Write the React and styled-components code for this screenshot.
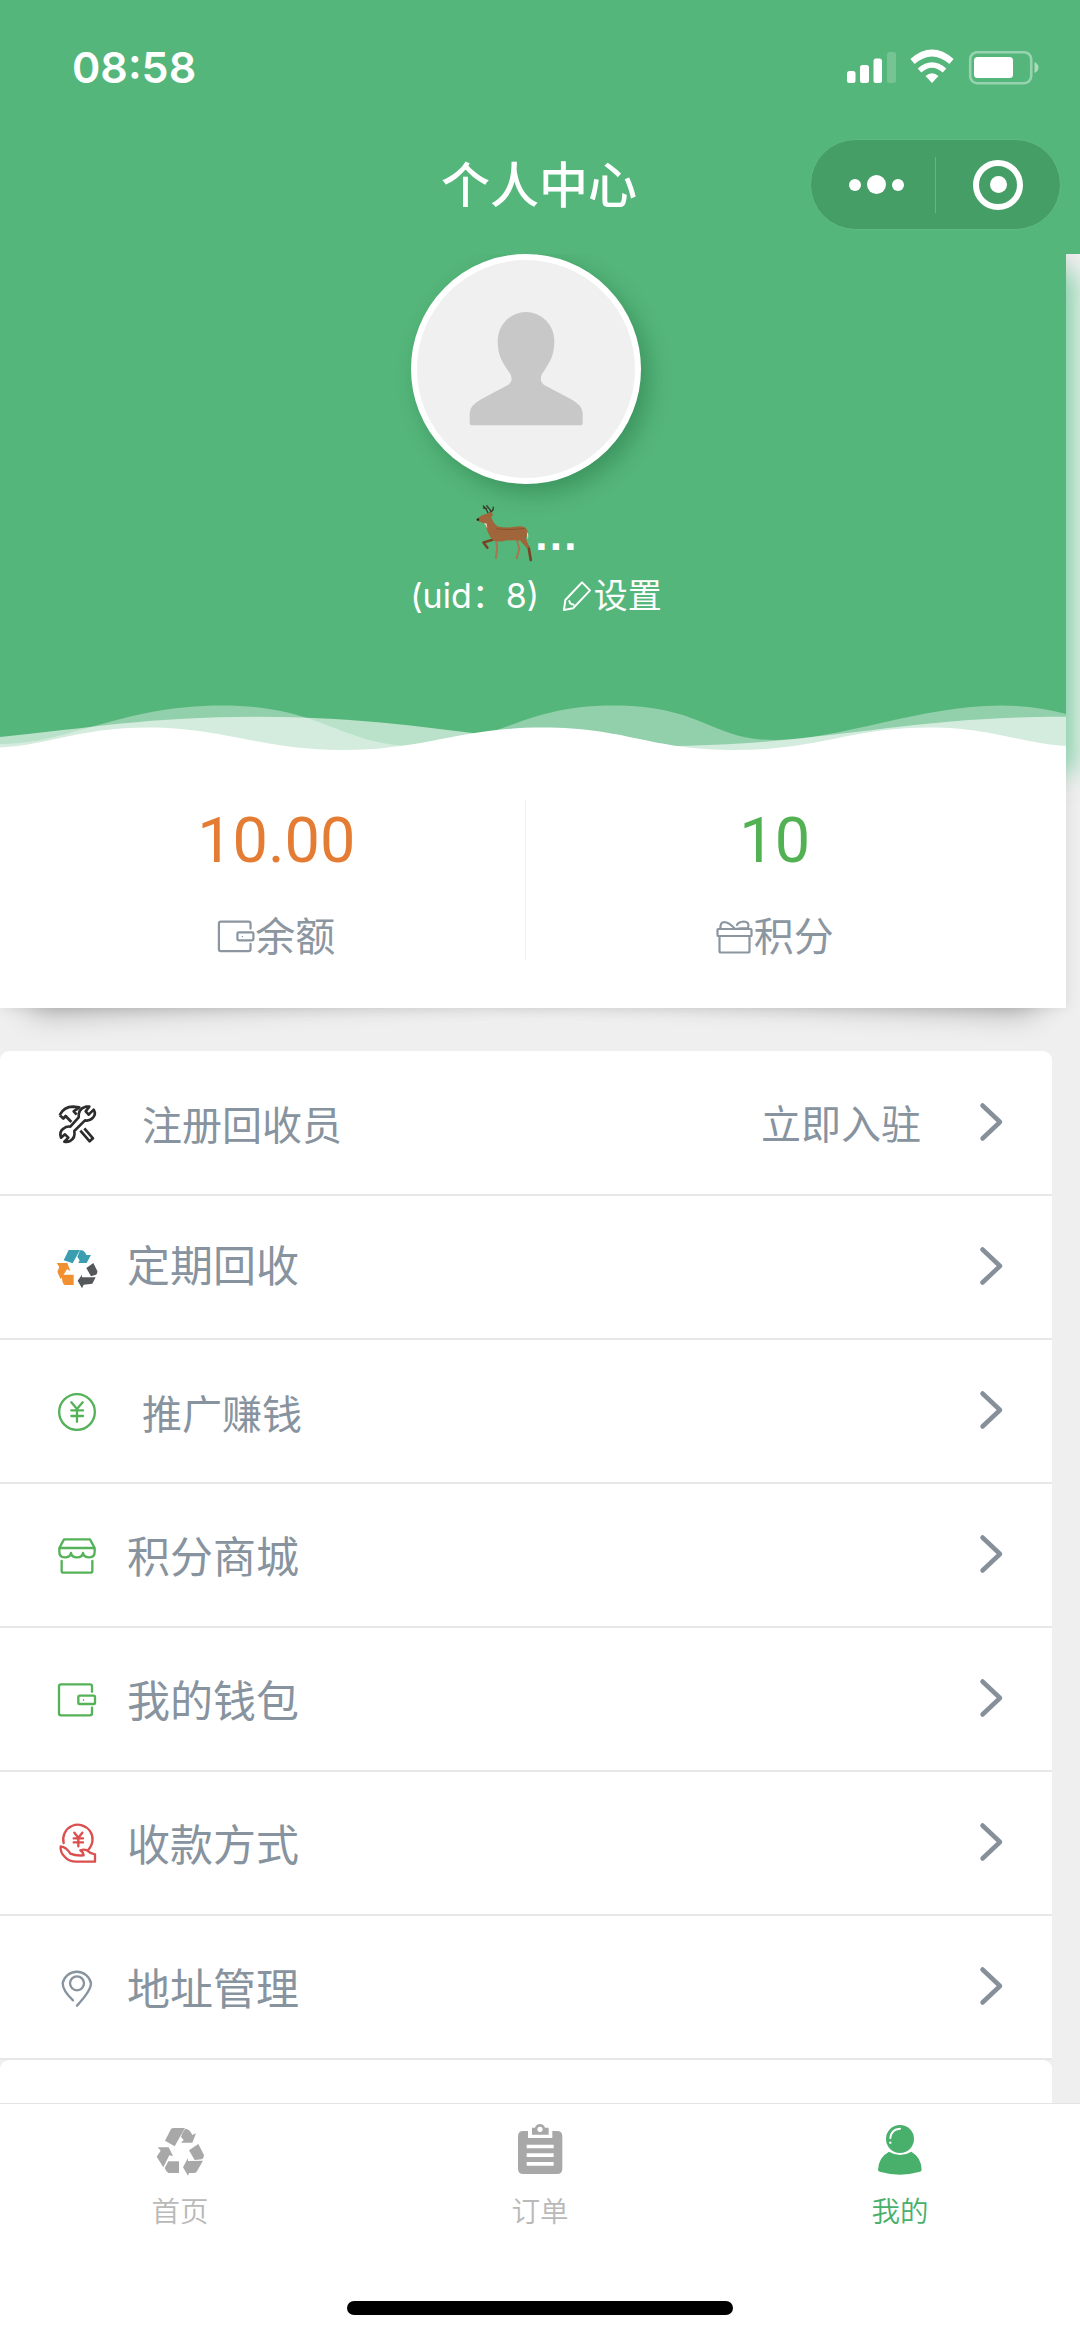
import styled, { createGlobalStyle } from 'styled-components';

const GlobalStyle = createGlobalStyle`
  * {
    box-sizing: border-box;
  }

  body {
    margin: 0;
    background: #efefef;
    font-family: Inter, "Noto Sans CJK SC", sans-serif;
  }
`;

const Screen = styled.div`
  width: 1080px;
  height: 2339px;
  display: flex;
  flex-direction: column;
  overflow: hidden;
  background: #efefef;
`;

const TopBar = styled.header`
  height: 254px;
  flex: none;
  background: #54b67a;
  color: #fff;
`;

const StatusBar = styled.div`
  height: 133px;
  padding: 0 40px 0 72px;
  display: flex;
  align-items: center;
  justify-content: space-between;
`;

const Time = styled.span`
  font-size: 43px;
  font-weight: 600;
`;

const StatusIcons = styled.svg`
  width: 194px;
  height: 36px;
`;

const NavBar = styled.div`
  height: 103px;
  display: grid;
  grid-template-columns: 1fr auto 1fr;
  align-items: center;
  padding-right: 19px;
`;

const NavTitle = styled.h1`
  grid-column: 2;
  margin: 2px -18px 0 -1px;
  font-size: 49px;
  font-weight: 500;
  line-height: 72px;
`;

const Capsule = styled.div`
  justify-self: end;
  width: 251px;
  height: 91px;
  border-radius: 46px;
  border: 1px solid #5fbb83;
  background: #469e67;
  display: flex;
  align-items: center;
`;

const CapsuleButton = styled.div`
  width: 124px;
  display: flex;
  align-items: center;
  justify-content: center;
  gap: 6px;
  padding-left: ${props => props.$indent || 0}px;
`;

const CapsuleLine = styled.div`
  width: 1px;
  height: 56px;
  background: #6ab385;
`;

const Dot = styled.span`
  flex: none;
  width: ${props => props.$size}px;
  height: ${props => props.$size}px;
  border-radius: 50%;
  background: #fff;
`;

const Ring = styled.span`
  width: 50px;
  height: 50px;
  border: 6px solid #fff;
  border-radius: 50%;
  display: flex;
  align-items: center;
  justify-content: center;
`;

const Content = styled.main`
  height: 1849px;
  flex: none;
  overflow: hidden;
`;

const ProfileCard = styled.section`
  position: relative;
  z-index: 0;
  width: 1066px;
  height: 754px;
  box-shadow: 0 0 14px rgba(0, 0, 0, 0.1);

  &::before,
  &::after {
    content: '';
    position: absolute;
    z-index: -1;
    bottom: 43px;
    width: 50%;
    height: 43px;
    box-shadow: 0 34px 30px rgba(0, 0, 0, 0.3);
  }

  &::before {
    left: 29px;
    transform: rotate(-3deg);
  }

  &::after {
    right: 29px;
    transform: rotate(3deg);
  }
`;

const Profile = styled.div`
  height: 500px;
  background: #54b67a;
  box-shadow: 12px 18px 22px rgba(84, 200, 136, 0.55);
  color: #fff;
  display: flex;
  flex-direction: column;
  align-items: center;
  padding-right: 14px;
`;

const Avatar = styled.div`
  width: 230px;
  height: 230px;
  flex: none;
  border: 6px solid #fff;
  border-radius: 50%;
  background: #f0f0f0;
  box-shadow: 8px 9px 22px rgba(0, 60, 25, 0.28);

  svg {
    display: block;
    width: 218px;
    height: 218px;
  }
`;

const Nickname = styled.div`
  height: 83px;
  display: flex;
  align-items: flex-end;
  padding: 0 0 10px;
  font-family: "Liberation Sans", sans-serif;
  font-size: 44px;
  font-weight: 700;
  line-height: 44px;
  letter-spacing: 2.2px;

  svg {
    width: 62px;
    height: 62px;
    margin-bottom: -7px;
  }
`;

const UserMeta = styled.div`
  display: flex;
  align-items: center;
  height: 58px;
  margin-left: 20px;
  font-size: 34px;
  line-height: 58px;
  white-space: pre;

  svg {
    width: 34px;
    height: 34px;
    margin-left: 11px;
  }
`;

const Wave = styled.svg`
  display: block;
  flex: none;
  align-self: flex-start;
  width: 1066px;
  height: 54px;
  margin-top: auto;
`;

const StatsPanel = styled.div`
  height: 254px;
  background: #fff;
`;

const Stats = styled.div`
  display: flex;
  padding: 46px 43px 0 27px;
`;

const Stat = styled.div`
  flex: 1;
  height: 160px;
  display: flex;
  flex-direction: column;
  align-items: center;
  padding-left: 1px;
  border-right: ${props => (props.$divided ? '1px solid #f0f0f0' : 'none')};
`;

const StatValue = styled.div`
  flex: none;
  margin-top: 9px;
  height: 96px;
  font-family: Roboto, sans-serif;
  font-size: 63px;
  line-height: 64px;
  color: ${props => props.$color};
`;

const StatLabel = styled.div`
  display: flex;
  align-items: center;
  font-size: 40px;
  line-height: 64px;
  color: #8b96a0;

  svg {
    width: 38px;
    height: 38px;
  }
`;

const List = styled.section`
  width: 1052px;
  margin-top: 43px;
  border-radius: 9px 9px 0 0;
  background: #fff;
  overflow: hidden;
`;

const NextList = styled(List)`
  margin-top: 0;
  height: 60px;
`;

const Row = styled.div`
  height: 144px;
  display: flex;
  align-items: center;
  padding: 2px 41px 0 56px;
  border-bottom: 2px solid #e6e7e8;
  color: #87939e;

  &:first-child {
    height: 145px;
  }
`;

const RowIcon = styled.svg`
  width: 42px;
  height: 42px;
  flex: none;
  overflow: visible;
`;

const RowLabel = styled.span`
  flex: 1;
  margin-left: ${props => (props.$small ? 44 : 29)}px;
  padding-top: ${props => (props.$small ? 5 : 1)}px;
  padding-bottom: ${props => (props.$raised ? 5 : 0)}px;
  font-size: ${props => (props.$small ? 40 : 43)}px;
  line-height: 60px;
`;

const RowExtra = styled.span`
  font-size: 40px;
  line-height: 60px;
  padding-top: 2px;
  margin-right: 50px;
`;

const Arrow = styled.svg`
  width: 40px;
  height: 42px;
  margin-bottom: 4px;
`;

const TabBar = styled.nav`
  height: 236px;
  flex: none;
  display: flex;
  flex-direction: column;
  align-items: center;
  background: #fff;
  border-top: 1px solid #e4e4e4;
`;

const Tabs = styled.div`
  width: 100%;
  height: 197px;
  display: flex;
`;

const Tab = styled.div`
  flex: 1;
  display: flex;
  flex-direction: column;
  align-items: center;
  padding-top: 16px;
  font-size: 28.5px;
  line-height: 40px;
  font-weight: 350;
  color: ${props => (props.$active ? '#49b06c' : '#b9b9b9')};

  svg {
    width: 60px;
    height: 60px;
    margin-bottom: 12px;
  }
`;

const HomeIndicator = styled.div`
  width: 386px;
  height: 14px;
  border-radius: 7px;
  background: #000;
`;

const PhoneStatus = () => (
  <StatusIcons viewBox="846 48 194 36" fill="#fff">
    <rect x="847" y="70" width="8.5" height="12" rx="2.5" />
    <rect x="860" y="64" width="9" height="18" rx="2.5" />
    <rect x="873.5" y="57.5" width="8.5" height="24.5" rx="2.5" />
    <rect x="887" y="51" width="9" height="31" rx="2.5" opacity="0.2" />
    <path d="M932 82L925.5 75Q932 69.5 938.5 75Z" />
    <path d="M912.5 60.5Q932 43.5 951.5 60.5" fill="none" stroke="#fff" strokeWidth="6.5" />
    <path d="M919.5 69.5Q932 58.5 944.5 69.5" fill="none" stroke="#fff" strokeWidth="5.5" />
    <rect x="970.2" y="51.2" width="61" height="31" rx="7" fill="none" stroke="#fff" strokeOpacity="0.4" strokeWidth="2.6" />
    <rect x="974" y="56" width="39" height="21" rx="3.5" />
    <path d="M1034.5 61q4 2 4 5.5t-4 5.5z" opacity="0.5" />
  </StatusIcons>
);

const Deer = () => (
  <svg viewBox="272 786 190 190">
    <g fill="none" strokeLinecap="round" strokeLinejoin="round">
      <path d="M318 820Q314 808 304 798M314 806Q308 806 304 804M324 818Q336 812 334 802M326 812L314 797" stroke="#3c3a2c" strokeWidth="4" />
      <path d="M343 905L346 930L342 958M406 902L414 930L406 958" stroke="#a9744f" strokeWidth="6" />
      <path d="M332 902L304 910L316 926M425 898L443 928L449 964" stroke="#7d4123" strokeWidth="8" />
    </g>
    <path d="M286 838Q296 826 312 823L330 816L333 826L328 832Q334 852 348 861Q376 866 400 862Q432 856 438 872Q442 888 434 896L444 928L436 926L416 904Q384 902 364 906Q338 910 328 898Q316 880 308 852L290 846Z" fill="#a0653a" />
    <path d="M306 850L314 852L316 868Z" fill="#e7d2b8" />
    <path d="M437 878Q445 888 439 900Z" fill="#efe2d4" />
    <circle cx="287" cy="840" r="4" fill="#2c2320" />
    <path d="M344 868Q380 873 430 867" stroke="#8a5029" strokeWidth="3" fill="none" />
  </svg>
);

const WalletShape = () => (
  <g fill="none" stroke="currentColor" strokeWidth="7" strokeLinecap="round" strokeLinejoin="round">
    <path d="M187 575V559q0-6-6-6H94q-6 0-6 6v81q0 6 6 6h87q6 0 6-6v-17" />
    <rect x="146" y="587" width="50" height="25" rx="4" />
    <circle cx="161" cy="600" r="1" strokeWidth="3" />
  </g>
);

const icons = {
  tools: (
    <RowIcon viewBox="79 67 126 126" fill="none" stroke="#2d2d2d" strokeWidth="8" strokeLinejoin="round">
      <path d="M147 110Q145 84 168 78L179 78L168 92L177 102L192 87Q200 101 190 111Q180 122 166 119L134 151Q138 172 121 181Q113 185 104 183L116 171L106 161L94 171Q88 153 101 144Q111 136 122 138Z" />
      <path d="M90 103Q103 78 130 78L149 80L132 92L141 102M90 103L101 114L108 106L125 124" />
      <path d="M152 150L180 182L190 173L164 143" />
    </RowIcon>
  ),
  recycle: (
    <RowIcon viewBox="80 501 126 126">
      <g fill="#3a9eb0">
        <path d="M103 541L118 510H152L130 550Z" />
        <path d="M152 511Q165 508 171 525L185 525L172 549H147L151 541L144 531Z" />
      </g>
      <g fill="#f0902f">
        <path d="M82 549H114L123 573L113 568L94 598L84 575L90 561Z" />
        <path d="M96 584H133V615H108Q101 614 99 602Z" />
      </g>
      <g fill="#55585b">
        <path d="M171 564L192 549L204 573Q205 580 200 584L185 589Z" />
        <path d="M145 602L158 584V592H199L189 611L163 614L158 625Z" />
      </g>
    </RowIcon>
  ),
  yen: (
    <RowIcon viewBox="79 932 126 126" fill="none" stroke="#55b259" strokeWidth="7" strokeLinecap="round">
      <circle cx="142" cy="995" r="53.5" />
      <path d="M125 966L142 986L159 966M142 986V1024M125 990H160M125 1007H160" />
    </RowIcon>
  ),
  shop: (
    <RowIcon viewBox="79 104 126 126" fill="none" stroke="#55b259" strokeWidth="7" strokeLinecap="round" strokeLinejoin="round">
      <path d="M89 143L103 117H181L195 143V155Q195 171 179 171Q162 171 160 158Q158 171 142 171Q126 171 124 158Q122 171 105 171Q89 171 89 155ZM89 143H195" />
      <path d="M96 182V212Q96 217 101 217H183Q188 217 188 212V182" />
    </RowIcon>
  ),
  wallet: (
    <RowIcon viewBox="79 537 126 126" color="#55b259">
      <WalletShape />
    </RowIcon>
  ),
  pay: (
    <RowIcon viewBox="79 98 126 126" fill="none" stroke="#d9504f" strokeWidth="7" strokeLinecap="round" strokeLinejoin="round">
      <path d="M102 158A44 44 0 1 1 175 179" />
      <path d="M93 168Q91 186 105 199Q118 214 140 214H196V192Q182 190 172 180Q163 176 152 180Q160 185 162 195Q138 197 122 190Q110 170 93 168Z" />
      <path d="M134 127L146 142L158 127M146 142V168M132 144H160M132 156H160" />
    </RowIcon>
  ),
  address: (
    <RowIcon viewBox="79 531 126 126" fill="none" stroke="#87939e" strokeWidth="7" strokeLinecap="round">
      <circle cx="142" cy="580" r="21" />
      <path d="M130 631Q99 602 99 580A43 41 0 0 1 184 580Q184 602 142 647" />
    </RowIcon>
  ),
};

const rows = [
  { icon: 'tools', label: '注册回收员', small: true, extra: '立即入驻' },
  { icon: 'recycle', label: '定期回收', raised: true },
  { icon: 'yen', label: '推广赚钱', small: true },
  { icon: 'shop', label: '积分商城' },
  { icon: 'wallet', label: '我的钱包' },
  { icon: 'pay', label: '收款方式' },
  { icon: 'address', label: '地址管理' },
];

const App = () => {
  return (
    <>
      <GlobalStyle />
      <Screen>
        <TopBar>
          <StatusBar>
            <Time>08:58</Time>
            <PhoneStatus />
          </StatusBar>
          <NavBar>
            <NavTitle>个人中心</NavTitle>
            <Capsule>
              <CapsuleButton $indent={6}>
                <Dot $size={12} />
                <Dot $size={19} />
                <Dot $size={12} />
              </CapsuleButton>
              <CapsuleLine />
              <CapsuleButton>
                <Ring>
                  <Dot $size={17} />
                </Ring>
              </CapsuleButton>
            </Capsule>
          </NavBar>
        </TopBar>

        <Content>
          <ProfileCard>
            <Profile>
              <Avatar>
                <svg viewBox="111 58 654 654">
                  <path d="M353 300A85 86 0 0 1 523 300C523 348 508 366 486 400Q476 422 494 434L572 475Q608 494 608 518V546Q608 554 600 554H277Q269 554 269 546V518Q269 494 305 475L382 434Q402 422 391 400C369 366 353 348 353 300Z" fill="#c8c8c8" />
                </svg>
              </Avatar>
              <Nickname>
                <Deer />
                <span>...</span>
              </Nickname>
              <UserMeta>
                <span>(uid：8) </span>
                <svg viewBox="540 1012 96 102" fill="none" stroke="#fff" strokeWidth="6" strokeLinejoin="round">
                  <path d="M603 1022L627 1046L576 1100L549 1105L553 1075ZM564 1076L568 1086L580 1090" />
                </svg>
                <span>设置</span>
              </UserMeta>
              <Wave viewBox="0 700 1066 54" preserveAspectRatio="none">
                <path d="M0 744C70 744 120 705.5 222 705.5S340 746 417 746S520 705.5 612 705.5S710 740 775 740S920 705.5 1001 705.5Q1036 705.5 1066 714V760H0Z" fill="#fff" opacity="0.36" />
                <path d="M0 737C90 728 150 716.7 258 716.7C420 716.7 500 746 660 746S900 716.7 1060 716.7H1066V760H0Z" fill="#fff" opacity="0.6" />
                <path d="M0 747.5C50 745 80 727.5 147 727.5C225 727.5 260 750 343 750S460 727.5 543 727.5S650 750 735 750S850 727.5 930 727.5C990 727.5 1020 743 1066 746V760H0Z" fill="#fff" />
              </Wave>
            </Profile>
            <StatsPanel>
              <Stats>
                <Stat $divided>
                  <StatValue $color="#e57c33">10.00</StatValue>
                  <StatLabel>
                    <svg viewBox="82 542 119 119"><WalletShape /></svg>
                    余额
                  </StatLabel>
                </Stat>
                <Stat>
                  <StatValue $color="#52b152">10</StatValue>
                  <StatLabel>
                    <svg viewBox="0 0 38 38" fill="none" stroke="currentColor" strokeWidth="2.2" strokeLinejoin="round" strokeLinecap="round">
                      <rect x="1.5" y="11" width="34" height="7" rx="0.8" />
                      <path d="M3.5 18V33Q3.5 34.5 5 34.5H32Q33.5 34.5 33.5 33V18" />
                      <path d="M19 11Q13 4 8 4Q4 4.5 4.5 10.5M19 11Q25 10 32 10Q34 4 28 3.5Q22 4 21 7" />
                    </svg>
                    积分
                  </StatLabel>
                </Stat>
              </Stats>
            </StatsPanel>
          </ProfileCard>

          <List>
            {rows.map(row => (
              <Row key={row.icon}>
                {icons[row.icon]}
                <RowLabel $small={row.small} $raised={row.raised}>{row.label}</RowLabel>
                {row.extra && <RowExtra>{row.extra}</RowExtra>}
                <Arrow viewBox="0 0 40 42" fill="none" stroke="#87909a" strokeWidth="4.5" strokeLinecap="round" strokeLinejoin="round">
                  <path d="M11.5 4.5L29 21L11.5 37.5" />
                </Arrow>
              </Row>
            ))}
          </List>
          <NextList />
        </Content>

        <TabBar>
          <Tabs>
            <Tab>
              <svg viewBox="150 240 180 180" fill="#a8a8a8">
                <path d="M195 302L213 267Q215 264 222 264H255L224 319Z" />
                <path d="M243 308L251 300L243 291Q247 276 256 266Q268 266 277 285L288 280L277 308Z" />
                <path d="M267 331L295 312L312 345Q312 355 305 358L284 360Z" />
                <path d="M249 382L264 354V363L309 362L290 395Q288 399 280 399H267L264 407Z" />
                <path d="M173 322H206L219 348L208 346L190 382L170 350L182 332Z" />
                <path d="M205 364H237V399H205Q199 396 194 384Z" />
              </svg>
              首页
            </Tab>
            <Tab>
              <svg viewBox="1231 240 180 180" fill="#a8a8a8">
                <path fillRule="evenodd" d="M1285 273h-14q-16 0-16 16v97q0 16 16 16h101q16 0 16-16v-97q0-16-16-16h-14v21h-73zM1281 314h81v11h-81zM1281 340h81v11h-81zM1281 366h81v11h-81z" />
                <path fillRule="evenodd" d="M1297 284v-21h9q4-11 15-11t15 11h11v21zM1321 260a8 8 0 1 0 0.1 0z" />
              </svg>
              订单
            </Tab>
            <Tab $active>
              <svg viewBox="813 240 180 180" fill="#49b06c">
                <circle cx="903" cy="297" r="42" />
                <path d="M870 335Q903 355 937 335Q968 353 968 390Q968 394 960 396Q903 412 845 396Q837 394 837 390Q838 352 870 335Z" />
                <path d="M874 294Q877 267 903 266" fill="none" stroke="#fff" strokeWidth="6" strokeLinecap="round" />
                <circle cx="874" cy="308" r="3.5" fill="#fff" />
              </svg>
              我的
            </Tab>
          </Tabs>
          <HomeIndicator />
        </TabBar>
      </Screen>
    </>
  );
};

export default App;
